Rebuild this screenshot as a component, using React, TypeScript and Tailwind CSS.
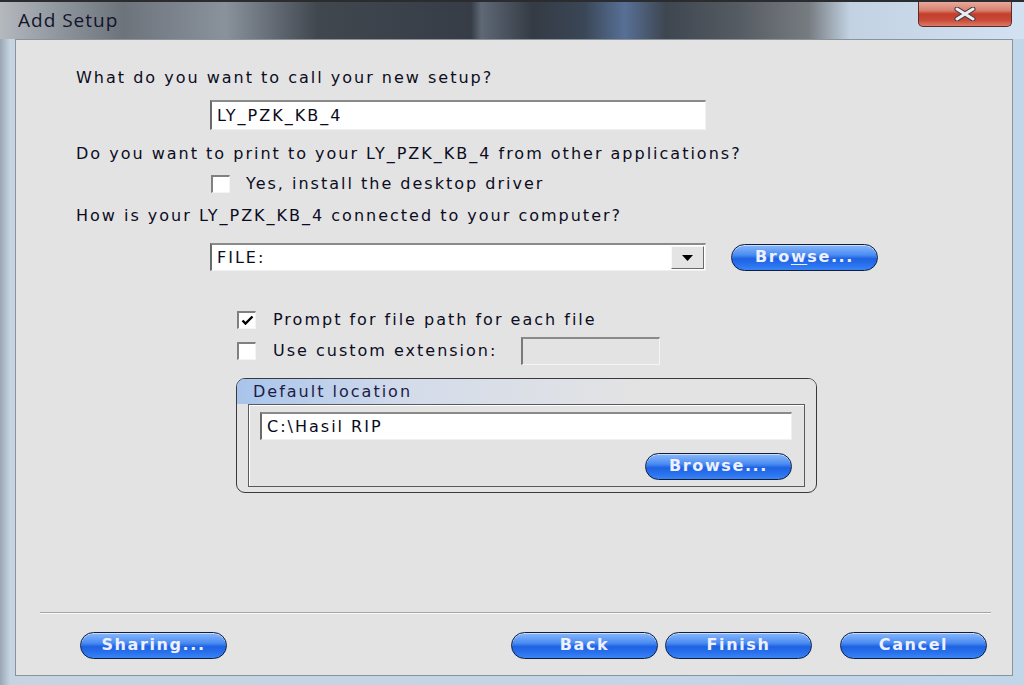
import React from 'react';

const font = { fontFamily: '"DejaVu Sans", Verdana, sans-serif' };

const AquaButton = ({ label, mnemonic }: { label: string; mnemonic?: number }) => {
  // mnemonic = index of the underlined letter
  const text =
    mnemonic === undefined ? (
      label
    ) : (
      <>
        {label.slice(0, mnemonic)}
        <span className="underline underline-offset-2">{label[mnemonic]}</span>
        {label.slice(mnemonic + 1)}
      </>
    );
  return (
    <button
      className="flex h-[27px] w-[147px] shrink-0 items-center justify-center rounded-full border-[1.5px] border-[#0d1e40] bg-[linear-gradient(180deg,#8ab8fa_0%,#4a8cf2_40%,#1e62e2_55%,#2a72ee_80%,#3a84f4_100%)] pb-[1px] text-[16px] font-semibold tracking-[1.6px] text-[#eef0ff] shadow-[inset_0_1px_0_rgba(255,255,255,0.55)]"
      style={font}
    >
      {text}
    </button>
  );
};

const CheckBox = ({ checked }: { checked?: boolean }) => (
  <div className="flex h-[18px] w-[19px] shrink-0 items-center justify-center border-t-2 border-l-2 border-b border-r border-t-[#808080] border-l-[#808080] border-b-[#f4f4f4] border-r-[#f4f4f4] bg-white">
    {checked && (
      <svg width="13" height="11" viewBox="0 0 13 11">
        <path d="M1.5 5.5 L4.5 8.5 L11.5 1.5" fill="none" stroke="#000" strokeWidth="2.4" />
      </svg>
    )}
  </div>
);

const TextBox = ({ value, className }: { value: string; className: string }) => (
  <div
    className={`flex items-center border-t-2 border-l-2 border-b border-r border-t-[#8a8a8a] border-l-[#6a6a6a] border-b-[#f0f0f0] border-r-[#f0f0f0] bg-white px-[5px] text-[16px] tracking-[2px] text-[#0a0a1a] ${className}`}
    style={font}
  >
    {value}
  </div>
);

export default function App() {
  return (
    <div className="flex h-[685px] w-[1024px] flex-col overflow-hidden bg-[#1b1d22]" style={font}>
      {/* title bar */}
      <div className="relative flex h-[39px] shrink-0 items-center border-t-2 border-[#2a2c30] bg-[linear-gradient(90deg,#b4b9be_0%,#8d949c_6%,#6c737b_12%,#8a929c_22%,#40474f_31%,#363d46_46%,#5f6876_47%,#343b44_52%,#3a4656_57%,#587096_61%,#3e4650_65%,#555b62_72%,#777c81_79%,#c2d2e2_83%,#d2e2f2_100%)] pl-[18px]">
        <span className="text-[19px] tracking-[1px] text-[#14142a]" style={{ fontFamily: '"Open Sans", "DejaVu Sans", sans-serif' }}>
          Add Setup
        </span>
        <div className="absolute right-[12px] top-[0px] flex h-[25px] w-[94px] items-center justify-center rounded-b-[5px] border border-t-0 border-[#5a2a26] bg-[linear-gradient(180deg,#e8aa9c_0%,#d8806e_35%,#c43e2c_50%,#c84a36_75%,#dc7a66_100%)]">
          <svg width="26" height="14" viewBox="0 0 26 14">
            <path d="M5 2 L21 12 M21 2 L5 12" stroke="#3a3a44" strokeWidth="5" strokeLinecap="round" />
            <path d="M5 2 L21 12 M21 2 L5 12" stroke="#eeeef2" strokeWidth="3" strokeLinecap="round" />
          </svg>
        </div>
      </div>

      {/* frame body */}
      <div className="flex min-h-0 flex-1 bg-[linear-gradient(90deg,#9aa6b2_0%,#c6d4e2_1%,#c2d6ea_100%)] pb-[9px] pl-[15px] pr-[11px]">
        <div className="flex flex-1 flex-col border border-[#8a929c] bg-[#e3e3e3] text-[16px] tracking-[2px] text-[#0c0c1e]">
          <div className="flex flex-col pl-[60px]">
            <div className="mt-[28px] h-[20px] leading-[20px]">What do you want to call your new setup?</div>
            <TextBox value="LY_PZK_KB_4" className="ml-[134px] mt-[12px] h-[30px] w-[496px]" />
            <div className="mt-[14px] h-[20px] leading-[20px]">
              Do you want to print to your LY_PZK_KB_4 from other applications?
            </div>
            <div className="ml-[135px] mt-[10px] flex h-[20px] items-center gap-[16px]">
              <CheckBox />
              <span>Yes, install the desktop driver</span>
            </div>
            <div className="mt-[12px] h-[20px] leading-[20px]">How is your LY_PZK_KB_4 connected to your computer?</div>

            <div className="ml-[134px] mt-[17px] flex h-[28px] items-center">
              <div className="flex h-[28px] w-[496px] items-center border-t-2 border-l-2 border-b border-r border-t-[#8a8a8a] border-l-[#6a6a6a] border-b-[#f0f0f0] border-r-[#f0f0f0] bg-white">
                <span className="flex-1 pl-[5px]">FILE:</span>
                <div className="mr-[1px] flex h-[23px] w-[33px] items-center justify-center border border-t-[#f8f8f8] border-l-[#f8f8f8] border-b-[#6a6a6a] border-r-[#6a6a6a] bg-[#e4e4e4]">
                  <svg width="11" height="6" viewBox="0 0 11 6">
                    <path d="M0 0 H11 L5.5 6 Z" fill="#000" />
                  </svg>
                </div>
              </div>
              <div className="ml-[25px]">
                <AquaButton label="Browse..." mnemonic={3} />
              </div>
            </div>

            <div className="ml-[161px] mt-[39px] flex h-[20px] items-center gap-[17px]">
              <CheckBox checked />
              <span>Prompt for file path for each file</span>
            </div>
            <div className="ml-[161px] mt-[7px] flex h-[28px] items-center gap-[17px]">
              <CheckBox />
              <span className="w-[231px] shrink-0 whitespace-nowrap">Use custom extension:</span>
              <div className="h-[28px] w-[139px] border-t-2 border-l-2 border-b border-r border-t-[#8a8a8a] border-l-[#7a7a7a] border-b-[#f4f4f4] border-r-[#f4f4f4] bg-[#e3e3e3]" />
            </div>

            {/* group box */}
            <div className="ml-[160px] mt-[13px] flex h-[115px] w-[581px] flex-col overflow-hidden rounded-[9px] border-[1.5px] border-[#3a3a3e] bg-[#e3e3e3]">
              <div className="flex h-[25px] shrink-0 items-end bg-[linear-gradient(90deg,#a8c4ec_0%,#d4dcea_30%,#e3e3e3_70%)] pl-[16px] pb-[3px] leading-[18px] text-[#1c1c44]">
                Default location
              </div>
              <div className="mx-[11px] mb-[5px] flex flex-1 flex-col border border-[#5a5a5e] shadow-[inset_1px_1px_0_#ffffff]">
                <TextBox value="C:\Hasil RIP" className="ml-[11px] mt-[7px] h-[28px] w-[532px]" />
                <div className="mr-[12px] mt-[13px] flex justify-end">
                  <AquaButton label="Browse..." />
                </div>
              </div>
            </div>
          </div>

          <div className="ml-[24px] mt-[119px] h-[2px] w-[951px] border-t border-b border-t-[#a4a4a4] border-b-[#fafafa]" />

          <div className="mt-[18px] flex">
            <div className="ml-[64px]">
              <AquaButton label="Sharing..." />
            </div>
            <div className="ml-[284px]">
              <AquaButton label="Back" />
            </div>
            <div className="ml-[7px]">
              <AquaButton label="Finish" />
            </div>
            <div className="ml-[28px]">
              <AquaButton label="Cancel" />
            </div>
          </div>
        </div>
      </div>
    </div>
  );
}
